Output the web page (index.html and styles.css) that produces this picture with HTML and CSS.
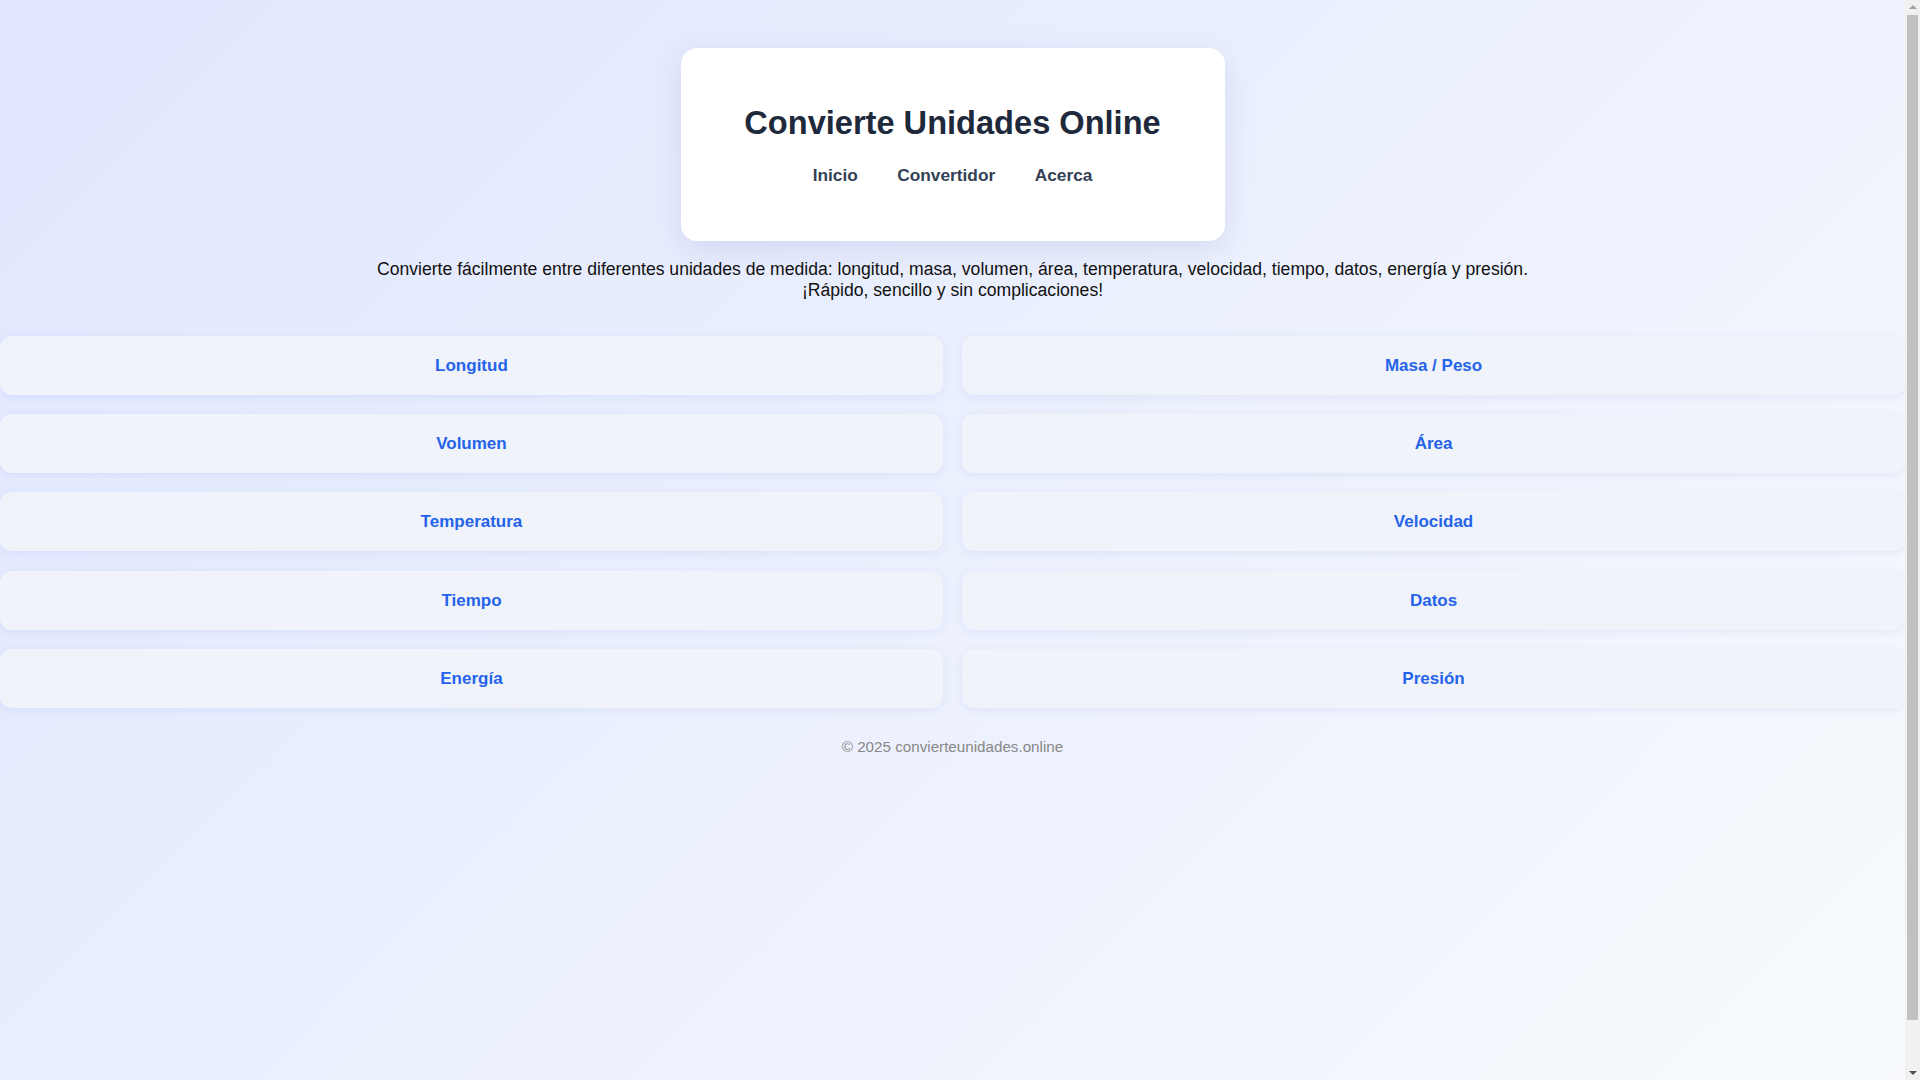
FILE: index.html
```html
<!DOCTYPE html>
<html lang="es">
<head>
<meta charset="utf-8">
<title>Convierte Unidades Online</title>
<link rel="stylesheet" href="styles.css">
</head>
<body>
<header class="site-header">
  <h1 class="site-title">Convierte Unidades Online</h1>
  <nav class="site-nav">
    <a href="#">Inicio</a>
    <a href="#">Convertidor</a>
    <a href="#">Acerca</a>
  </nav>
</header>
<p class="intro">Convierte fácilmente entre diferentes unidades de medida: longitud, masa, volumen, área, temperatura, velocidad, tiempo, datos, energía y presión.<br>¡Rápido, sencillo y sin complicaciones!</p>
<main class="grid">
  <a class="card" href="#">Longitud</a>
  <a class="card" href="#">Masa / Peso</a>
  <a class="card" href="#">Volumen</a>
  <a class="card" href="#">Área</a>
  <a class="card" href="#">Temperatura</a>
  <a class="card" href="#">Velocidad</a>
  <a class="card" href="#">Tiempo</a>
  <a class="card" href="#">Datos</a>
  <a class="card" href="#">Energía</a>
  <a class="card" href="#">Presión</a>
</main>
<footer class="site-footer">© 2025 convierteunidades.online</footer>
<div class="scrollbar" aria-hidden="true">
  <span class="sb-arrow sb-up"></span>
  <span class="sb-thumb"></span>
  <span class="sb-arrow sb-down"></span>
</div>
</body>
</html>
```
FILE: styles.css
```css
html {
  background: linear-gradient(135deg, #e0e7ff 0%, #f8fafc 100%);
  min-height: 100%;
}
body {
  margin: 0 15px 0 0;
  padding-top: 48px;
  min-height: 100vh;
  font-family: "Liberation Sans", Arial, sans-serif;
  color: #111;
}
.site-header {
  width: 544px;
  box-sizing: border-box;
  margin: 0 auto;
  padding: 56px 24px 55px;
  background: #fff;
  border-radius: 16px;
  box-shadow: 0 8px 30px rgba(80, 90, 160, 0.14);
  text-align: center;
}
.site-title {
  margin: 0 0 23px;
  font-size: 32.6px;
  font-weight: 700;
  line-height: normal;
  color: #1e293b;
}
.site-nav {
  display: flex;
  justify-content: center;
  gap: 39.5px;
}
.site-nav a {
  font-size: 17.3px;
  font-weight: 700;
  color: #334155;
  text-decoration: none;
}
.intro {
  margin: 18px 0 0;
  text-align: center;
  font-size: 17.6px;
  line-height: 21px;
  color: #111;
}
.grid {
  display: grid;
  grid-template-columns: 1fr 1fr;
  gap: 19.2px;
  margin-top: 35px;
}
.card {
  display: block;
  padding: 20px 16px 18.4px;
  background: #f0f4fa;
  border-radius: 12px;
  box-shadow: 0 2px 8px rgba(99, 120, 220, 0.12);
  text-align: center;
  font-size: 17px;
  line-height: 20.6px;
  font-weight: 700;
  color: #2563eb;
  text-decoration: none;
}
.site-footer {
  margin-top: 30px;
  text-align: center;
  font-size: 15.2px;
  color: #888;
}
.scrollbar {
  position: fixed;
  top: 0;
  right: 0;
  width: 15px;
  height: 100vh;
  background: #f1f1f1;
  display: flex;
  flex-direction: column;
  align-items: center;
}
.sb-arrow {
  flex: none;
  width: 0;
  height: 0;
  border-left: 4px solid transparent;
  border-right: 4px solid transparent;
}
.sb-up {
  margin: 5px 0 6px;
  border-bottom: 4px solid #a3a3a3;
}
.sb-thumb {
  flex: none;
  width: 11px;
  height: 1005px;
  background: #c1c1c1;
}
.sb-down {
  margin-top: auto;
  margin-bottom: 5px;
  border-top: 4px solid #505050;
}
```
